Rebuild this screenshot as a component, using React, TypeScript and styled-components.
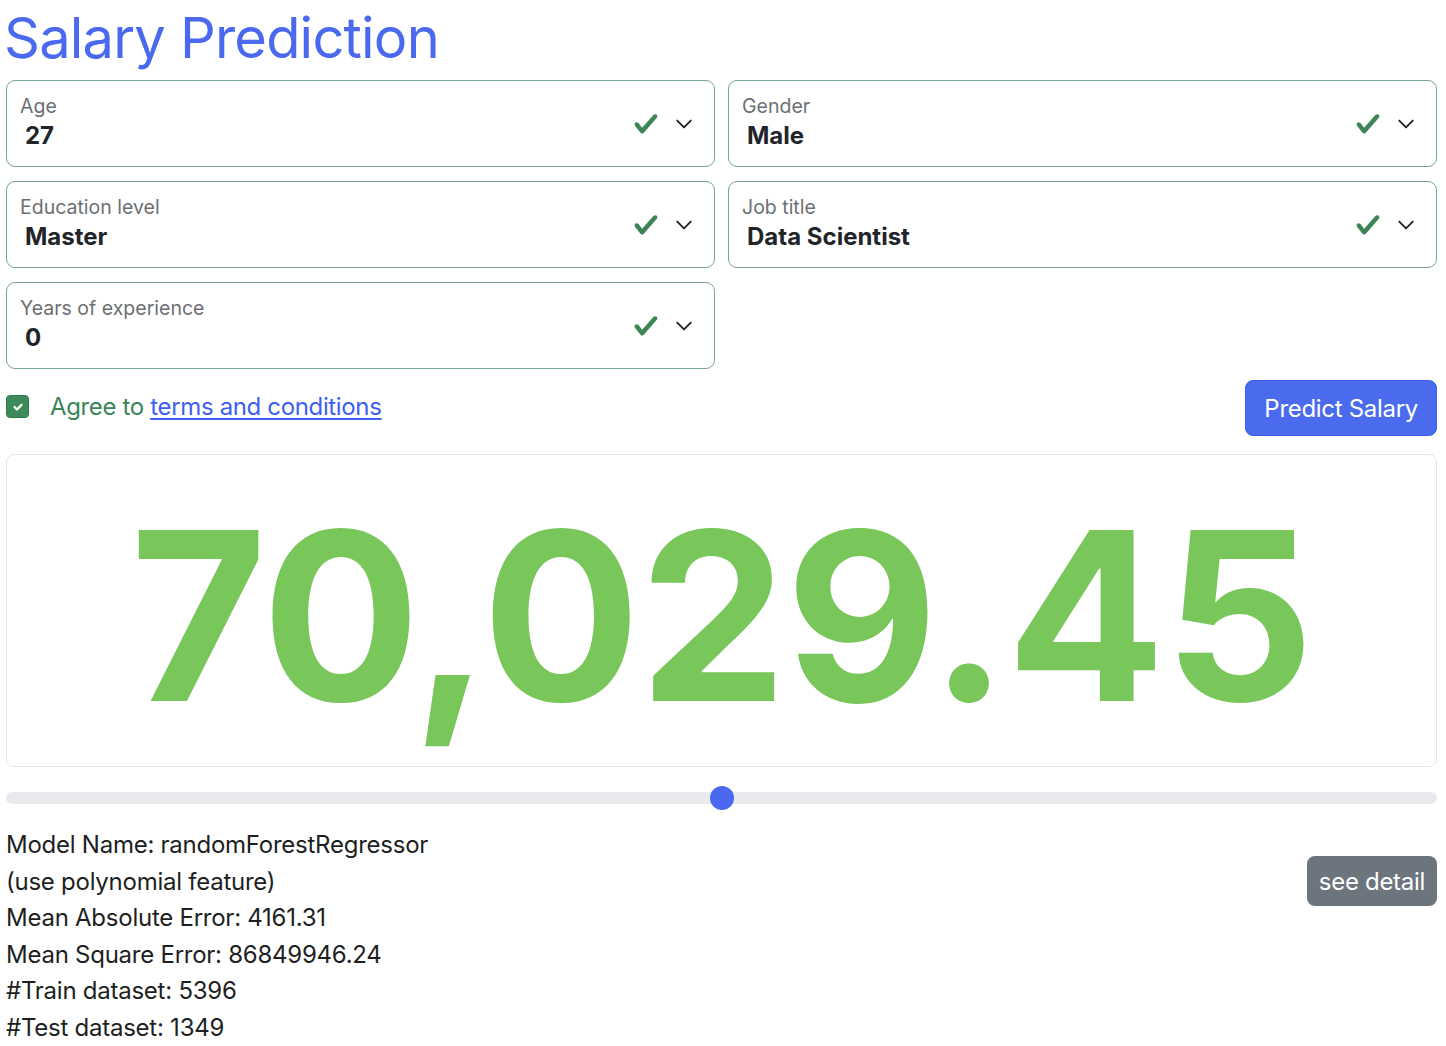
import React from "react";
import styled, { createGlobalStyle } from "styled-components";

const GlobalStyle = createGlobalStyle`
  html, body { margin: 0; padding: 0; background: #ffffff; }
  body {
    font-family: Inter, "Noto Sans", "Liberation Sans", sans-serif;
    color: #212529;
  }
  * { box-sizing: border-box; }
`;

const Page = styled.div`
  padding: 0 9px 0 6px;
  display: flex;
  flex-direction: column;
`;

const Title = styled.h1`
  margin: 0 0 0 -2px;
  padding-top: 3px;
  font-size: 56px;
  font-weight: 400;
  line-height: 70px;
  color: #4a69ee;
  letter-spacing: -0.8px;
`;

const FieldGrid = styled.div`
  margin-top: 7px;
  display: grid;
  grid-template-columns: 1fr 1fr;
  column-gap: 13px;
  row-gap: 14px;
`;

const Field = styled.div`
  position: relative;
  height: 87px;
  border: 1.5px solid #78a68a;
  border-radius: 9px;
  display: flex;
  align-items: center;
  padding: 0 18px 0 18px;
  background: #fff;
`;

const FieldText = styled.div`
  flex: 1;
  display: flex;
  flex-direction: column;
  margin-top: -3px;
`;

const FieldLabel = styled.span`
  font-size: 19.5px;
  line-height: 24px;
  color: #6b6f74;
  margin-left: -5px;
`;

const FieldValue = styled.span`
  margin-top: 3px;
  font-size: 24px;
  line-height: 30px;
  font-weight: 700;
  color: #212529;
`;

const Icons = styled.div`
  display: flex;
  align-items: center;
  gap: 16px;
  margin-right: 3px;
`;

const CheckIcon = () => (
  <svg width="26" height="26" viewBox="0 0 8 8">
    <path
      fill="#3d8557"
      d="M2.3 6.73.6 4.53c-.4-1.04.46-1.4 1.1-.8l1.1 1.4 3.4-3.8c.6-.63 1.6-.27 1.2.7l-4 4.6c-.43.5-.8.4-1.1.1z"
    />
  </svg>
);

const ChevronIcon = () => (
  <svg width="18" height="18" viewBox="0 0 16 16">
    <path fill="none" stroke="#212529" strokeWidth="1.7" strokeLinecap="round" strokeLinejoin="round" d="m2 5 6 6 6-6" />
  </svg>
);

const ActionRow = styled.div`
  margin-top: 11px;
  display: flex;
  align-items: center;
  justify-content: space-between;
`;

const Agree = styled.label`
  display: flex;
  align-items: center;
  gap: 21px;
  font-size: 24px;
  letter-spacing: -0.35px;
  color: #3b8557;
  margin-top: -3px;
`;

const CheckBox = styled.span`
  width: 23px;
  height: 23px;
  border-radius: 4px;
  background: #3d8a5b;
  border: 1px solid #2f7a4c;
  display: flex;
  align-items: center;
  justify-content: center;
`;

const Link = styled.a`
  color: #3e5ff0;
  text-decoration: underline;
  text-underline-offset: 3px;
`;

const PrimaryButton = styled.button`
  height: 56px;
  padding: 0 18px;
  font-family: inherit;
  font-size: 24px;
  letter-spacing: -0.3px;
  color: #fff;
  background: #4b6bee;
  border: 1px solid #3e5ff0;
  border-radius: 8px;
`;

const ResultCard = styled.div`
  margin-top: 18px;
  height: 313px;
  border: 1px solid #e3e5e8;
  border-radius: 8px;
  display: flex;
  align-items: center;
  justify-content: center;
`;

const BigNumber = styled.div`
  font-size: 235px;
  font-weight: 700;
  color: #79c65b;
  line-height: 1;
  letter-spacing: -1.5px;
  margin-top: 10px;
`;

const SliderWrap = styled.div`
  position: relative;
  margin-top: 25px;
  height: 12px;
  border-radius: 6px;
  background: #e9eaee;
`;

const Thumb = styled.div`
  position: absolute;
  top: 50%;
  width: 24px;
  height: 24px;
  border-radius: 50%;
  background: #4b69ef;
  transform: translate(-50%, -50%);
`;

const InfoRow = styled.div`
  margin-top: 23px;
  display: flex;
  align-items: flex-start;
  justify-content: space-between;
`;

const InfoList = styled.div`
  font-size: 24px;
  line-height: 36.6px;
  letter-spacing: -0.25px;
  color: #1d1f22;
`;

const SecondaryButton = styled.button`
  margin-top: 29px;
  height: 50px;
  padding: 0 12px;
  font-family: inherit;
  font-size: 24px;
  letter-spacing: -0.3px;
  color: #fff;
  background: #6c747d;
  border: none;
  border-radius: 8px;
`;

const fields = [
  { label: "Age", value: "27" },
  { label: "Gender", value: "Male" },
  { label: "Education level", value: "Master" },
  { label: "Job title", value: "Data Scientist" },
  { label: "Years of experience", value: "0" },
];

const info = [
  "Model Name: randomForestRegressor",
  "(use polynomial feature)",
  "Mean Absolute Error: 4161.31",
  "Mean Square Error: 86849946.24",
  "#Train dataset: 5396",
  "#Test dataset: 1349",
];

export default function App() {
  const sliderPos = 50.0;
  return (
    <>
      <GlobalStyle />
      <Page>
        <Title>Salary Prediction</Title>
        <FieldGrid>
          {fields.map((f) => (
            <Field key={f.label}>
              <FieldText>
                <FieldLabel>{f.label}</FieldLabel>
                <FieldValue>{f.value}</FieldValue>
              </FieldText>
              <Icons>
                <CheckIcon />
                <ChevronIcon />
              </Icons>
            </Field>
          ))}
        </FieldGrid>
        <ActionRow>
          <Agree>
            <CheckBox>
              <svg width="14" height="14" viewBox="0 0 20 20">
                <path fill="none" stroke="#fff" strokeWidth="3.2" strokeLinecap="round" strokeLinejoin="round" d="m5 10 3.5 3.5L15 7" />
              </svg>
            </CheckBox>
            <span>
              Agree to <Link href="#">terms and conditions</Link>
            </span>
          </Agree>
          <PrimaryButton>Predict Salary</PrimaryButton>
        </ActionRow>
        <ResultCard>
          <BigNumber>70,029.45</BigNumber>
        </ResultCard>
        <SliderWrap>
          <Thumb style={{ left: `${sliderPos}%` }} />
        </SliderWrap>
        <InfoRow>
          <InfoList>
            {info.map((l) => (
              <div key={l}>{l}</div>
            ))}
          </InfoList>
          <SecondaryButton>see detail</SecondaryButton>
        </InfoRow>
      </Page>
    </>
  );
}
